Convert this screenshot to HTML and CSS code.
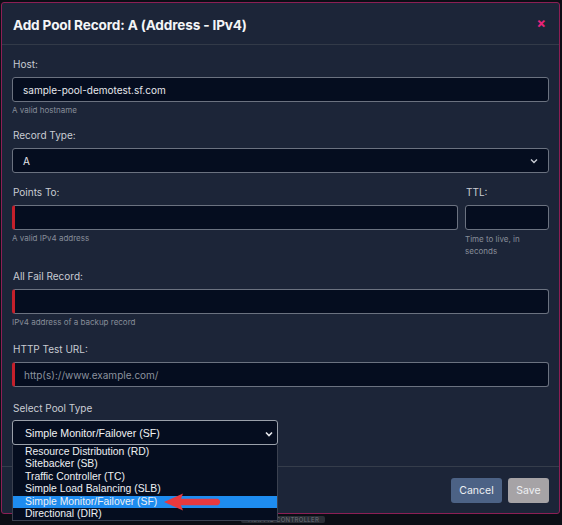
FILE: index.html
```html
<!DOCTYPE html>
<html>
<head>
<meta charset="utf-8">
<link rel="stylesheet" href="styles.css">
</head>
<body>
<div class="page">
  <div class="modal">
    <div class="header">
      <div class="title">Add Pool Record: A (Address - IPv4)</div>
      <div class="close">×</div>
    </div>
    <div class="body">
      <div class="field">
        <div class="label">Host:</div>
        <div class="input">sample-pool-demotest.sf.com</div>
        <div class="help">A valid hostname</div>
      </div>
      <div class="field">
        <div class="label">Record Type:</div>
        <div class="input select">A
          <svg class="chev" width="8" height="6" viewBox="0 0 8 6"><path d="M1 1.5 L4 4.5 L7 1.5" fill="none" stroke="#c8ccd4" stroke-width="1.4"/></svg>
        </div>
      </div>
      <div class="row">
        <div class="field grow">
          <div class="label">Points To:</div>
          <div class="input invalid"></div>
          <div class="help">A valid IPv4 address</div>
        </div>
        <div class="field ttl">
          <div class="label">TTL:</div>
          <div class="input"></div>
          <div class="help">Time to live, in seconds</div>
        </div>
      </div>
      <div class="field allfail">
        <div class="label">All Fail Record:</div>
        <div class="input invalid"></div>
        <div class="help">IPv4 address of a backup record</div>
      </div>
      <div class="field http">
        <div class="label">HTTP Test URL:</div>
        <div class="input invalid placeholder">http(s)://www.example.com/</div>
      </div>
      <div class="field pool">
        <div class="label">Select Pool Type</div>
        <div class="input select native">Simple Monitor/Failover (SF)
          <svg class="chev" width="8" height="6" viewBox="0 0 8 6"><path d="M1 1.5 L4 4.5 L7 1.5" fill="none" stroke="#e8eaee" stroke-width="1.6"/></svg>
        </div>
        <div class="dropdown">
          <div class="opt">Resource Distribution (RD)</div>
          <div class="opt">Sitebacker (SB)</div>
          <div class="opt">Traffic Controller (TC)</div>
          <div class="opt">Simple Load Balancing (SLB)</div>
          <div class="opt sel">Simple Monitor/Failover (SF)</div>
          <div class="opt">Directional (DIR)</div>
          <svg class="arrow" width="62" height="20" viewBox="0 0 62 20">
            <path d="M2 10 L21 1.5 L19 6.8 L56 6.8 Q60.5 10 56 13.2 L19 13.2 L21 18.5 Z" fill="#e8393f"/>
          </svg>
        </div>
      </div>
    </div>
    <div class="footer">
      <div class="btn cancel">Cancel</div>
      <div class="btn save">Save</div>
    </div>
  </div>
  <div class="under">
    <span class="tab">TRAFFIC CONTROLLER</span>
  </div>
</div>
</body>
</html>
```
FILE: styles.css
```css
* { box-sizing: border-box; }
html, body { margin: 0; padding: 0; background: #0b0e15; }
body { width: 562px; height: 525px; overflow: hidden; font-family: Inter, "Noto Sans", sans-serif; }
.page { padding: 2px 2px 0 1px; }
.modal {
  background: #1c2538;
  border: 1px solid #8c1f55;
  border-radius: 3px;
  height: 512px;
  display: flex;
  flex-direction: column;
}
.header {
  height: 42px;
  display: flex;
  align-items: center;
  justify-content: space-between;
  padding: 0 13px 0 11px;
  border-bottom: 1px solid #323a48;
}
.title {
  color: #f4f5f7;
  font-weight: 700;
  font-size: 13.6px;
  letter-spacing: -0.15px;
  margin-top: 3px;
}
.close {
  color: #e8237a;
  font-weight: 700;
  font-size: 14px;
  margin-top: -3px;
}
.body {
  padding: 12px 10px 0 10px;
  flex: 1;
}
.field { display: flex; flex-direction: column; }
.label {
  color: #c9ccd3;
  font-size: 10px;
  height: 14px;
  line-height: 14px;
  margin-bottom: 6px;
  margin-left: 1px;
}
.input {
  height: 25px;
  background: #050d1f;
  border: 1px solid #6b7280;
  border-radius: 3px;
  color: #e6e8ec;
  font-size: 10px;
  display: flex;
  align-items: center;
  padding-left: 10px;
  position: relative;
}
.input.invalid { border-left: 3px solid #c4202b; padding-left: 9px; }
.input.placeholder { color: #8b929e; }
.help {
  color: #878d98;
  font-size: 8px;
  margin-top: 3px;
  line-height: 11px;
}
.body > .field, .body > .row { margin-bottom: 12px; }
.body > .allfail { margin-bottom: 14px; }
.body > .http { margin-bottom: 14px; }
.select .chev { position: absolute; right: 10px; top: 9px; }
.row { display: flex; gap: 7px; }
.grow { flex: 1; }
.ttl { width: 84px; }
.ttl .help { line-height: 12px; }
.pool { position: relative; width: 266px; }
.pool .label { margin-bottom: 5px; }
.native {
  border-color: #9aa0aa;
  color: #f2f3f5;
  font-family: "Liberation Sans", Arial, sans-serif;
  font-size: 10.6px;
  padding-left: 12px;
}
.native .chev { right: 4px; top: 10px; }
.dropdown {
  position: absolute;
  left: 0;
  top: 44px;
  width: 266px;
  background: #050d1f;
  border: 1px solid #3b4150;
  border-top: none;
  padding-top: 1px;
  z-index: 5;
}
.opt {
  height: 12.4px;
  line-height: 12.4px;
  font-family: "Liberation Sans", Arial, sans-serif;
  font-size: 10.4px;
  color: #eef0f3;
  padding-left: 12px;
  white-space: nowrap;
}
.opt.sel { background: #1e8cf0; }
.arrow { position: absolute; left: 149px; top: 47px; }
.footer {
  height: 47px;
  border-top: 1px solid #353d4b;
  display: flex;
  justify-content: flex-end;
  align-items: center;
  gap: 6px;
  padding: 0 10px 0 0;
}
.btn {
  height: 25px;
  border-radius: 3px;
  color: #eef0f3;
  font-size: 10.5px;
  display: flex;
  align-items: center;
  justify-content: center;
}
.cancel { width: 51px; background: #4c6285; }
.save { width: 41px; background: #a6a3a6; }
.under { height: 10px; position: relative; }
.tab {
  position: absolute;
  left: 240px;
  top: 2px;
  background: #2a2e36;
  color: #6c7079;
  font-size: 6px;
  line-height: 7px;
  padding: 0 6px;
  border-radius: 2px;
  letter-spacing: 0.3px;
}
```
